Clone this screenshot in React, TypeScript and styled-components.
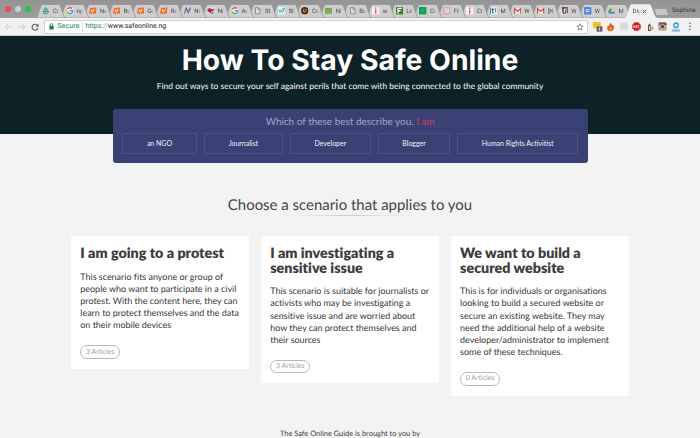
import React from "react";
import styled, { createGlobalStyle } from "styled-components";

const Global = createGlobalStyle`
  * { box-sizing: border-box; }
  html, body { margin: 0; padding: 0; overflow: hidden; background: #f3f3f3; }
  body { font-family: Lato, "Liberation Sans", sans-serif; text-rendering: geometricPrecision; font-variant-ligatures: none; color: #444; }
  h1, h2, h3, p { margin: 0; }
`;

const Page = styled.div`
  width: 700px;
  height: 438px;
  overflow: hidden;
  display: flex;
  flex-direction: column;
  background: #f3f3f3;
`;

/* ---------- browser chrome ---------- */

const TabStrip = styled.div`
  height: 18px;
  flex: none;
  display: flex;
  align-items: flex-end;
  background: linear-gradient(#949494, #9d9d9d);
  font-family: Roboto, "Liberation Sans", sans-serif;
  font-size: 6px;
`;

const WindowButtons = styled.div`
  width: 36px;
  height: 18px;
  flex: none;
  display: flex;
  align-items: center;
  gap: 3.8px;
  padding-left: 5px;
`;

const Light = styled.span<{ $color: string }>`
  width: 6px;
  height: 6px;
  border-radius: 50%;
  background: ${(p) => p.$color};
`;

const TabItem = styled.div<{ $active?: boolean; $order: number }>`
  position: relative;
  z-index: ${(p) => p.$order};
  width: ${(p) => (p.$active ? 32 : 29.5)}px;
  margin-right: ${(p) => (p.$active ? -4 : -5.95)}px;
  height: 14px;
  flex: none;
  display: grid;
  align-items: center;
  & > * { grid-area: 1 / 1; }
`;

const TabShape = styled.svg`
  width: 100%;
  height: 14px;
  display: block;
`;

const TabContent = styled.div`
  display: flex;
  align-items: center;
  gap: 3.2px;
  padding-left: 6.3px;
  width: 26px;
  overflow: hidden;
  white-space: nowrap;
  color: #444;
  svg { flex: none; }
`;

const TabTitle = styled.span`
  width: 6.6px;
  overflow: hidden;
  line-height: 9px;
  mask-image: linear-gradient(90deg, #000 60%, transparent);
`;

const ActiveContent = styled.div`
  display: flex;
  align-items: center;
  gap: 1.2px;
  padding-left: 7.5px;
  color: #444;
  svg { flex: none; }
`;

const ActiveTitle = styled(TabTitle)`
  width: 8px;
`;

const NewTab = styled.svg`
  width: 17px;
  height: 8px;
  flex: none;
  margin: 0 0 2.3px -0.5px;
`;

const Profile = styled.span`
  margin-left: auto;
  padding-right: 4.5px;
  align-self: center;
  font-size: 6.3px;
  line-height: 8px;
  letter-spacing: 0.1px;
  padding-top: 1px;
  color: #333;
`;

const Toolbar = styled.div`
  height: 18px;
  flex: none;
  display: flex;
  align-items: center;
  background: #f1f1f1;
  border-bottom: 1px solid #cdd0d0;
  font-family: Roboto, "Liberation Sans", sans-serif;
`;

const NavButtons = styled.div`
  width: 44px;
  flex: none;
  display: flex;
  align-items: center;
  gap: 5.5px;
  padding-left: 4px;
`;

const Address = styled.div`
  width: 543.5px;
  height: 14px;
  flex: none;
  display: flex;
  align-items: center;
  background: #fff;
  border: 1px solid #cfcfcf;
  border-radius: 2px;
  padding: 0 3px 0 4px;
  font-size: 7px;
  line-height: 9px;
  color: #222;
`;

const Secure = styled.span`
  color: #16804a;
  margin-left: 3.4px;
  letter-spacing: 0.12px;
`;

const Divider = styled.span`
  width: 1px;
  height: 10px;
  background: #ddd;
  margin: 0 2.4px 0 2.6px;
`;

const Url = styled.span`
  flex: 1;
  font-size: 6.9px;
`;
const Scheme = styled.span`color: #16804a;`;
const Slashes = styled.span`color: #999;`;

const Extensions = styled.div`
  display: flex;
  align-items: center;
  gap: 3.6px;
  padding-left: 4px;
`;

/* ---------- page ---------- */

const Hero = styled.header`
  height: 97.5px;
  flex: none;
  background: #0c2227;
  color: #fff;
  display: flex;
  flex-direction: column;
  align-items: center;
  padding-top: 7px;
`;

const Title = styled.h1`
  font: 700 28.3px/34px Inter, "Liberation Sans", sans-serif;
  white-space: nowrap;
`;

const Subtitle = styled.p`
  margin-top: 3px;
  font-size: 8.48px;
  line-height: 12px;
  white-space: nowrap;
  color: #f8fafa;
`;

const Picker = styled.section`
  width: 474.5px;
  height: 53.3px;
  flex: none;
  margin: -24.2px 0 0 113px;
  border-radius: 3px;
  background: #3a4275;
  display: flex;
  flex-direction: column;
  padding: 5.2px 9.6px 0 9.4px;
`;

const Question = styled.p`
  font-size: 9.97px;
  line-height: 14px;
  text-align: center;
  color: #a3a5c0;
  white-space: nowrap;
`;

const Answer = styled.span`color: #cf3a4f;`;

const Roles = styled.div`
  display: flex;
  gap: 7px;
  margin-top: 4.1px;
`;

const Role = styled.button<{ $width: number }>`
  width: ${(p) => p.$width}px;
  height: 21px;
  flex: none;
  padding: 0;
  border: 1px solid #4a5287;
  border-radius: 1px;
  background: transparent;
  color: #f0f1f7;
  font: 400 6.98px/9px Lato, sans-serif;
  white-space: nowrap;
`;

const Heading = styled.h2`
  align-self: center;
  margin-top: 32.6px;
  font-size: 14.95px;
  font-weight: 400;
  line-height: 20px;
  color: #454545;
  white-space: nowrap;
`;

const Rule = styled.div`
  width: 112px;
  height: 1px;
  flex: none;
  align-self: center;
  background: linear-gradient(90deg, transparent, #c6c9da 50%, transparent);
`;

const Cards = styled.main`
  height: 192.6px;
  flex: none;
  display: flex;
  align-items: flex-start;
  gap: 11.3px;
  margin-top: 19.8px;
  padding-left: 70.8px;
`;

const Card = styled.article`
  width: 178.6px;
  flex: none;
  background: #fff;
  border-radius: 2px;
  padding: 11px 0 10px 9.5px;
  display: flex;
  flex-direction: column;
  align-items: flex-start;
`;

const CardTitle = styled.h3`
  font-size: 14.3px;
  font-weight: 800;
  line-height: 14.6px;
  color: #3d3d3d;
  white-space: pre;
`;

const CardText = styled.p`
  margin-top: 9px;
  font-size: 8.96px;
  line-height: 12.15px;
  color: #383838;
  white-space: pre;
`;

const Pill = styled.span`
  margin-top: 14.1px;
  width: 40px;
  height: 13.4px;
  display: flex;
  align-items: center;
  justify-content: center;
  border: 1px solid #b8b8b8;
  border-radius: 7px;
  font-size: 6.96px;
  line-height: 9px;
  color: #a0a0a0;
`;

const Footer = styled.footer`
  align-self: center;
  font-size: 7.45px;
  line-height: 10px;
  white-space: nowrap;
  color: #3c3c3c;
`;

/* ---------- icons ---------- */

const art: Record<string, React.ReactNode> = {
  drop: <g fill="none" stroke="#45a39b" strokeWidth="1.1"><path d="M4 .6 1.2 4.8a2.8 2.6 0 0 0 5.6 0Z" /><path d="M4 2.5V7M1 5.2 4 4l3 1.2" /></g>,
  google: <><circle cx="4" cy="4" r="4" fill="#f4f4f4" /><g fill="none" strokeWidth="1.4"><path d="M6.3 1.7A3.1 3.1 0 0 0 1.4 2.4" stroke="#ea4335" /><path d="M1.4 2.4a3.1 3.1 0 0 0 0 3.2" stroke="#fbbc05" /><path d="M1.4 5.6A3.1 3.1 0 0 0 6 6.4" stroke="#34a853" /><path d="M6 6.4A3.1 3.1 0 0 0 7.1 4H4" stroke="#4285f4" /></g></>,
  v: <><path d="M1 1.2 8 .6 7.4 7 .2 7.4Z" fill="#f36b1c" /><path d="m2.3 2.6 1.3 3 2.3-3.4" fill="none" stroke="#fff" /></>,
  chart: <><path d="M.5 7 2.5 1l2 5 2.5-5.5" fill="none" stroke="#3d6699" strokeWidth="1.1" /><path d="m4 7 3.6-5" stroke="#a66" strokeWidth=".7" /></>,
  map: <><rect width="8" height="8" fill="#ded5dc" /><path d="M.5 2.5 3 1l2 1.6 2.5-.8L7 4.2 4.8 5 4 7 2.6 5.4.8 5Z" fill="#b71d40" /><path d="M5 5.5h2v2H5z" fill="#657ca8" /></>,
  doc: <path d="M1.6.6h3l2 2v4.8h-5zM4.4.8v2h2" fill="#dedede" stroke="#777" strokeWidth=".8" />,
  sg: <><rect width="8" height="8" fill="#e8f4f5" /><path d="m1 3 1 3 1.5-3L5 6l1.8-4.7M4.3 2h3" fill="none" stroke="#36aebc" /></>,
  clock: <><circle cx="4" cy="4" r="3.9" fill="#38261c" /><circle cx="4" cy="4" r="2.3" fill="#e17a1e" /><path d="M4 1v3l1.5 1" stroke="#38261c" fill="none" /></>,
  leaf: <><rect x=".2" y="1" width="7.6" height="6.2" fill="#6c9c3c" /><path d="m1 2 2 2 2-2 2 2M1 6l2-1 4 1" stroke="#aac46b" fill="none" /></>,
  info: <><rect width="8" height="8" fill="#f7eeee" /><path d="M4 3v4" stroke="#dc4848" strokeWidth="1.4" /><circle cx="4" cy="1.4" r=".9" fill="#dc4848" /></>,
  f: <><rect width="8" height="8" fill="#3d7a2f" /><path d="M2.3 7V1.5h4M2.3 4H5" stroke="#fff" fill="none" strokeWidth="1.4" /></>,
  sheet: <><rect width="8" height="8" fill="#0aa353" /><path d="M2.3 3h3.4M2.3 5h3.4" stroke="#53bd83" strokeWidth=".7" /></>,
  pink: <><rect width="8" height="8" fill="#d9a3bd" /><rect x="1.7" y="1.7" width="4.6" height="4.6" fill="#f5e4ec" /><path d="M2.4 5.2 5.5 2.7" stroke="#ba8ba5" /></>,
  t: <><rect width="8" height="8" fill="#eef3f4" /><path d="M.4.4v7.2M2.8 1v5.3h1.5M1.7 2.8h2.8" stroke="#34576c" fill="none" /><path d="M6 1v5" stroke="#38adb6" strokeWidth="1.2" /></>,
  gmail: <><rect y="1" width="8" height="6" fill="#f0eded" /><path d="M.7 7V1.6L4 4.5l3.3-2.9V7" stroke="#d24a42" fill="none" strokeWidth="1.3" /></>,
  u: <><circle cx="4" cy="4" r="4" fill="#eee" /><path d="M.8 1h6.4M2.2 1v4.500q0 1.500 1.800 1.500" stroke="#2a2a2a" strokeWidth="1.4" fill="none" /><path d="M5 2.500v5" stroke="#c93b3b" strokeWidth="1.2" /><path d="M6.700 1.500v5" stroke="#2a2a2a" strokeWidth="1.1" /></>,
  docs: <><rect width="8" height="8" rx="1" fill="#4886ec" /><path d="M1.8 3h4.4M1.8 5h3.4" stroke="#fff" /></>,
  drive: <><path d="M2.7.8h2.6L8 5.2H5.4Z" fill="#f8c83b" /><path d="M2.7.8 0 5.3l1.3 2L4 3Z" fill="#25a567" /><path d="M2.6 5.2H8l-1.3 2.1H1.3Z" fill="#4688ef" /></>,
};

const tabs: [string, string][] = [
  ["drop", "Co"], ["google", "ng"], ["v", "Ne"], ["v", "Bu"], ["v", "Go"], ["v", "Re"],
  ["chart", "Ni"], ["map", "Ni"], ["google", "Ac"], ["doc", "St"], ["sg", "SG"], ["clock", "Co"],
  ["leaf", "Ni"], ["doc", "Ba"], ["info", "w"], ["f", "Lin"], ["sheet", "Co"], ["pink", "Fil"],
  ["info", "Cr"], ["t", "M"], ["gmail", "W"], ["gmail", "[N"], ["u", "W"], ["docs", "W"], ["drive", "M"],
];

const Favicon = ({ name }: { name: string }) => (
  <svg width="7.4" height="7.4" viewBox="0 0 8 8">{art[name]}</svg>
);

const NavIcons = () => (
  <NavButtons>
    <svg width="8" height="8" viewBox="0 0 8 8" fill="none" stroke="#cbcbcb"><path d="M7.5 4H1M4 1 1 4l3 3" /></svg>
    <svg width="8" height="8" viewBox="0 0 8 8" fill="none" stroke="#cbcbcb"><path d="M.5 4H7M4 1l3 3-3 3" /></svg>
    <svg width="8" height="8" viewBox="0 0 8 8" fill="none" stroke="#5c5c5c" strokeWidth="1.1"><path d="M6.6 2.5A3 3 0 1 0 7 5" /><path d="M7.5.7v3H4.5z" fill="#5c5c5c" stroke="none" /></svg>
  </NavButtons>
);

const ExtensionIcons = () => (
  <Extensions>
    <svg width="11" height="11" viewBox="0 0 11 11"><path d="M.8 1h8v6.2h-8z" fill="#f5c920" /><path d="M.8 3.4h8" stroke="#dcae10" strokeWidth=".6" /><rect x="4.5" y="5.3" width="6" height="5.5" rx="1" fill="#676767" /><path d="M7.5 6.5v3" stroke="#eee" strokeWidth=".9" /></svg>
    <svg width="9" height="10" viewBox="0 0 9 10"><path d="M4.4.6c.5 1.2 1.8 1.6 1.6 3l1-.9C9 6 7.5 9 4.5 9.2S.2 6 2 3.5l.8 1C3.5 3 4 2 4.4.6Z" fill="#e2541e" /><path d="M4.5 4.5C6.5 6 6 8 4.5 8S2.5 6.5 4.5 4.5Z" fill="#f7a523" /></svg>
    <svg width="10" height="9" viewBox="0 0 10 9"><rect x="1.5" y="1.2" width="7" height="6.6" rx=".8" fill="#e2e2e2" stroke="#c8c8c8" strokeWidth=".7" /><path d="M3 3.5h4M3 5.5h4" stroke="#c4c4c4" strokeWidth=".7" /></svg>
    <svg width="9" height="9" viewBox="0 0 9 9"><path d="M2.8.3h3.4l2.5 2.5v3.4L6.2 8.7H2.8L.3 6.2V2.8Z" fill="#de1624" /><path d="M1.500 5.700 2.200 3.400l.7 2.300M4 3.400v2.200h.8V3.400Zm3.300 0H6.200v2.200h1.100" fill="none" stroke="#fff" strokeWidth=".7" /></svg>
    <svg width="10" height="10" viewBox="0 0 10 10"><path d="M3 9V3.500L4.500 1.500 6 3.500V9Z" fill="#50504c" /><path d="M4 4h1.500v4H4z" fill="#d8cfb9" /><path d="M6 4.500h2.300v3.300H6z" fill="#c2a679" /></svg>
    <svg width="9" height="9" viewBox="0 0 9 9"><rect x=".5" y=".5" width="8" height="8" rx="1.2" fill="#b49a86" /><path d="M.5 3V1.700Q.5.500 1.700.500h5.600q1.200 0 1.200 1.200V3Z" fill="#72503f" /><path d="M1.500.5V3" stroke="#c9553d" /><circle cx="4.500" cy="4.600" r="2.200" fill="#4a4543" stroke="#ded2c7" strokeWidth=".8" /></svg>
    <svg width="10" height="10" viewBox="0 0 10 10"><circle cx="5" cy="3.200" r="2.200" fill="#e5f3fc" stroke="#2c94df" strokeWidth="1.3" /><path d="M1.500 9V6.800h7V9Z" fill="#9bc8e9" /><path d="M1 9h8" stroke="#5699c9" strokeWidth=".8" /></svg>
    <svg width="10" height="9" viewBox="0 0 10 9" fill="#555"><circle cx="5" cy="1.300" r=".8" /><circle cx="5" cy="4.300" r=".8" /><circle cx="5" cy="7.300" r=".8" /></svg>
  </Extensions>
);

const roles: [string, number][] = [
  ["an NGO", 74.2], ["Journalist", 79.5], ["Developer", 80.6], ["Blogger", 72.8], ["Human Rights Activitist", 120.4],
];

const scenarios = [
  {
    title: "I am going to a protest",
    text: "This scenario fits anyone or group of\npeople who want to participate in a civil\nprotest. With the content here, they can\nlearn to protect themselves and the data\non their mobile devices",
    articles: 3,
  },
  {
    title: "I am investigating a\nsensitive issue",
    text: "This scenario is suitable for journalists or\nactivists who may be investigating a\nsensitive issue and are worried about\nhow they can protect themselves and\ntheir sources",
    articles: 3,
  },
  {
    title: "We want to build a\nsecured website",
    text: "This is for individuals or organisations\nlooking to build a secured website or\nsecure an existing website. They may\nneed the additional help of a website\ndeveloper/administrator to implement\nsome of these techniques.",
    articles: 0,
  },
];

export default function App() {
  return (
    <Page>
      <Global />
      <TabStrip>
        <WindowButtons>
          <Light $color="#fb4650" />
          <Light $color="#cfcfcf" />
          <Light $color="#18cb3f" />
        </WindowButtons>
        {tabs.map(([icon, label], i) => (
          <TabItem key={i} $order={tabs.length - i}>
            <TabShape viewBox="0 0 29.5 14" preserveAspectRatio="none">
              <path d="M0 14 C2 14 4.300 .5 6.500 .5 H23 C25 .5 27.500 14 29.500 14 Z" fill="#cecece" stroke="#8d8d8d" strokeWidth=".7" />
            </TabShape>
            <TabContent>
              <Favicon name={icon} />
              <TabTitle>{label}</TabTitle>
            </TabContent>
          </TabItem>
        ))}
        <TabItem $active $order={40}>
          <TabShape viewBox="0 0 32 14" preserveAspectRatio="none">
            <path d="M0 14 C2.500 14 4 .3 6.500 .3 H24.500 C27 .3 29 14 32 14 Z" fill="#f1f1f1" />
          </TabShape>
          <ActiveContent>
            <ActiveTitle>Dig</ActiveTitle>
            <svg width="5" height="5" viewBox="0 0 5 5"><path d="m.7.7 3.600 3.600m0-3.600L.7 4.300" stroke="#555" strokeWidth=".9" /></svg>
          </ActiveContent>
        </TabItem>
        <NewTab viewBox="0 0 17 8"><path d="M.7.500H12.500q1 0 1.400 1L16 7.500H4.500q-1 0-1.400-1Z" fill="#c6c6c6" stroke="#8a8a8a" strokeWidth=".6" /></NewTab>
        <Profile>Sophina</Profile>
      </TabStrip>
      <Toolbar>
        <NavIcons />
        <Address>
          <svg width="5" height="7" viewBox="0 0 5 7"><rect x=".4" y="2.800" width="4.200" height="3.700" fill="#16804a" /><path d="M1.200 3V1.900a1.300 1.300 0 0 1 2.600 0V3" fill="none" stroke="#16804a" strokeWidth=".8" /></svg>
          <Secure>Secure</Secure>
          <Divider />
          <Url><Scheme>https:</Scheme><Slashes>//</Slashes>www.safeonline.ng</Url>
          <svg width="8" height="8" viewBox="0 0 8 8"><path d="m4 .8.9 2.200 2.300.1-1.800 1.500.6 2.300L4 5.700 2 6.900l.6-2.300L.8 3.100 3.100 3Z" fill="none" stroke="#666" strokeWidth=".7" /></svg>
        </Address>
        <ExtensionIcons />
      </Toolbar>
      <Hero>
        <Title>How To Stay Safe Online</Title>
        <Subtitle>Find out ways to secure your self against perils that come with being connected to the global community</Subtitle>
      </Hero>
      <Picker>
        <Question>Which of these best describe you. <Answer>I am</Answer></Question>
        <Roles>
          {roles.map(([label, width]) => (
            <Role key={label} $width={width}>{label}</Role>
          ))}
        </Roles>
      </Picker>
      <Heading>Choose a scenario that applies to you</Heading>
      <Rule />
      <Cards>
        {scenarios.map((s) => (
          <Card key={s.title}>
            <CardTitle>{s.title}</CardTitle>
            <CardText>{s.text}</CardText>
            <Pill>{s.articles} Articles</Pill>
          </Card>
        ))}
      </Cards>
      <Footer>The Safe Online Guide is brought to you by</Footer>
    </Page>
  );
}
